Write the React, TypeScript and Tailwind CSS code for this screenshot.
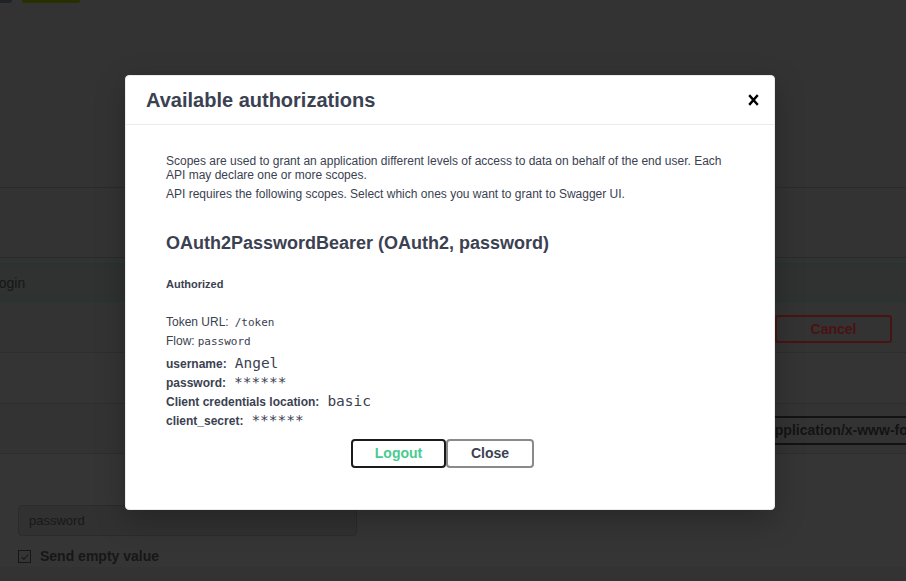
import { useState } from "react"

// Swagger-style auth modal over a dimmed operation page
const details = [
  { label: "username:", value: "Angel" },
  { label: "password:", value: "******" },
  { label: "Client credentials location:", value: "basic" },
  { label: "client_secret:", value: "******" },
]

function BackgroundPage() {
  return (
    <div className="flex h-full flex-col">
      <div className="flex h-[188px] items-start gap-[10px] border-b border-[#2b2b2b]">
        <div className="-ml-[10px] h-[3px] w-[22px] rounded-b-[5px] bg-[#1f2226]" />
        <div className="h-[3px] w-[58px] rounded-b-[6px] bg-[#263000]" />
      </div>
      <div className="h-[70px] border-b border-[#2a2a2a]" />
      <div className="mt-[5px] flex-1 border-t border-[#1c3a2d]">
        <div className="flex h-[38px] items-center border-b border-[#1c3a2d] bg-[#2f3231] pt-[1px]">
          <span className="-ml-[9px] text-[14px] text-[#161616]">Login</span>
        </div>
        <div className="flex h-[51px] items-center justify-end border-b border-[#2d2d2d] bg-[#333333] pr-[14px] pt-[4px]">
          <button className="h-[28px] w-[117px] rounded-[3px] border-2 border-[#4a1313] text-[14px] font-bold text-[#4a1212]">
            Cancel
          </button>
        </div>
        <div className="h-[51px] border-b border-[#2e2e2e] bg-[#343434]" />
        <div className="flex h-[50px] items-center border-b border-[#2e2e2e] bg-[#333333] pt-[3px]">
          <div className="ml-[758px] flex h-[29px] shrink-0 items-center whitespace-nowrap rounded-[4px] border-2 border-[#121212] pl-[7px] pr-[30px] text-[14px] font-bold text-[#131313]">
            application/x-www-form-urlencoded
          </div>
        </div>
        <div className="bg-[#353535] px-[18px] pt-[51px]">
          <div className="flex h-[31px] w-[339px] items-center rounded-[4px] border border-[#2b2b2b] bg-[#313131] px-[10px] text-[13px] text-[#181818]">
            password
          </div>
          <label className="mt-[10px] flex items-center gap-[9px] text-[14px] font-bold text-[#171717]">
            <span className="flex h-[13px] w-[13px] items-center justify-center border border-[#161616]">
              <svg viewBox="0 0 12 12" className="h-[10px] w-[10px]" fill="none" stroke="#161616" strokeWidth="1.3">
                <path d="M2 6.2l2.6 2.6L10 3" />
              </svg>
            </span>
            Send empty value
          </label>
        </div>
      </div>
    </div>
  )
}

function AuthModal({ onClose }: { onClose: () => void }) {
  return (
    <div className="absolute left-[125px] top-[75px] w-[650px] rounded-[4px] border border-[#ebebeb] bg-white shadow-[0_10px_30px_rgba(0,0,0,0.25)]">
      <div className="flex h-[49px] items-center justify-between border-b border-[#ebebeb] px-[20px]">
        <h3 className="text-[20px] font-bold text-[#3b4151]">Available authorizations</h3>
        <button onClick={onClose} className="-mr-[5px] flex h-[12px] w-[11px] items-center justify-center">
          <svg viewBox="0 0 11 12" className="h-[12px] w-[11px]" fill="none" stroke="#000" strokeWidth="2.4" strokeLinecap="square">
            <path d="M2 2l7 8M9 2l-7 8" />
          </svg>
        </button>
      </div>
      <div className="px-[40px] pb-[41px] pt-[29px] text-[#3b4151]">
        <p className="text-[12px] leading-[14px]">
          Scopes are used to grant an application different levels of access to data on behalf of the end user. Each API
          may declare one or more scopes.
        </p>
        <p className="mt-[5px] text-[12px] leading-[14px]">
          API requires the following scopes. Select which ones you want to grant to Swagger UI.
        </p>
        <h4 className="mt-[32px] text-[18px] font-bold leading-[20px]">OAuth2PasswordBearer (OAuth2, password)</h4>
        <h6 className="mt-[24px] text-[11px] font-bold leading-[14px]">Authorized</h6>
        <p className="mt-[22px] flex h-[19px] items-baseline text-[12px] leading-[19px]">
          Token URL:<code className="ml-[6px] font-['DejaVu_Sans_Mono',monospace] text-[11px] leading-[19px]">/token</code>
        </p>
        <p className="flex h-[19px] items-baseline text-[12px] leading-[19px]">
          Flow:<code className="ml-[3px] font-['DejaVu_Sans_Mono',monospace] text-[11px] leading-[19px]">password</code>
        </p>
        <div className="mt-[3px]">
          {details.map((d) => (
            <div key={d.label} className="flex h-[19px] items-baseline">
              <span className="text-[12px] font-bold leading-[19px]">{d.label}</span>
              <code className="ml-[8px] font-['DejaVu_Sans_Mono',monospace] text-[14.5px] leading-[19px] text-[#3b4151]">
                {d.value}
              </code>
            </div>
          ))}
        </div>
        <div className="mt-[9px] flex justify-center pr-[15px]">
          <button className="h-[29px] w-[95px] rounded-[4px] border-2 border-[#1b1b1b] text-[14px] font-bold text-[#49cc90]">
            Logout
          </button>
          <button
            onClick={onClose}
            className="h-[29px] w-[88px] rounded-[4px] border-2 border-[#8a8a8a] text-[14px] font-bold text-[#3b4151]"
          >
            Close
          </button>
        </div>
      </div>
    </div>
  )
}

export default function App() {
  const [open, setOpen] = useState(true)
  return (
    <div className="relative h-[581px] w-[906px] overflow-hidden bg-[#333333] font-['Liberation_Sans',Arial,sans-serif]">
      <BackgroundPage />
      {open && <AuthModal onClose={() => setOpen(false)} />}
    </div>
  )
}
